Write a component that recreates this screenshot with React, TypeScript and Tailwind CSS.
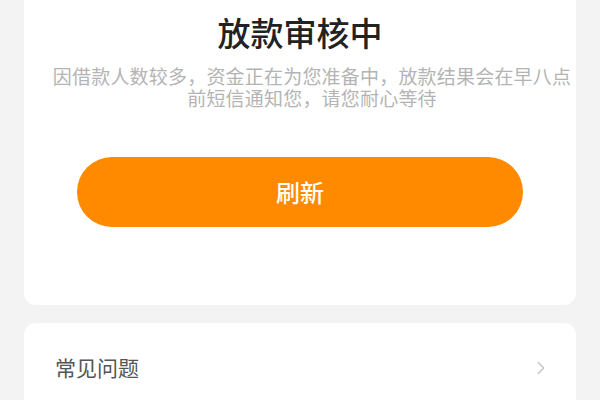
import { ChevronRight } from 'lucide-react';

export default function App() {
  return (
    <div
      className="h-[400px] bg-[#f3f3f3] px-6 overflow-hidden"
      style={{ fontFamily: '"Noto Sans CJK SC", "Noto Sans", sans-serif' }}
    >
      <div className="bg-white rounded-b-xl pt-[12px] pb-[78px] flex flex-col items-center">
        <h1 className="text-[33px] leading-[40px] font-medium text-[#222222]">放款审核中</h1>
        <p className="mt-[13px] pl-[26px] pr-[2px] text-center text-[19px] leading-[22px] tracking-[0.2px] text-[#b4b4b4]">
          因借款人数较多，资金正在为您准备中，放款结果会在早八点前短信通知您，请您耐心等待
        </p>
        <button className="mt-[48px] w-[446px] h-[70px] rounded-full bg-[#ff8a00] text-white text-[24px] font-medium">
          刷新
        </button>
      </div>

      <div className="mt-[18px] bg-white rounded-t-xl h-[77px] flex items-center justify-between pl-[31px] pr-[24px] pt-[13px]">
        <span className="text-[21px] text-[#555555]">常见问题</span>
        <ChevronRight className="w-[22px] h-[22px] text-[#c4c4c4]" strokeWidth={1.5} />
      </div>
    </div>
  );
}
